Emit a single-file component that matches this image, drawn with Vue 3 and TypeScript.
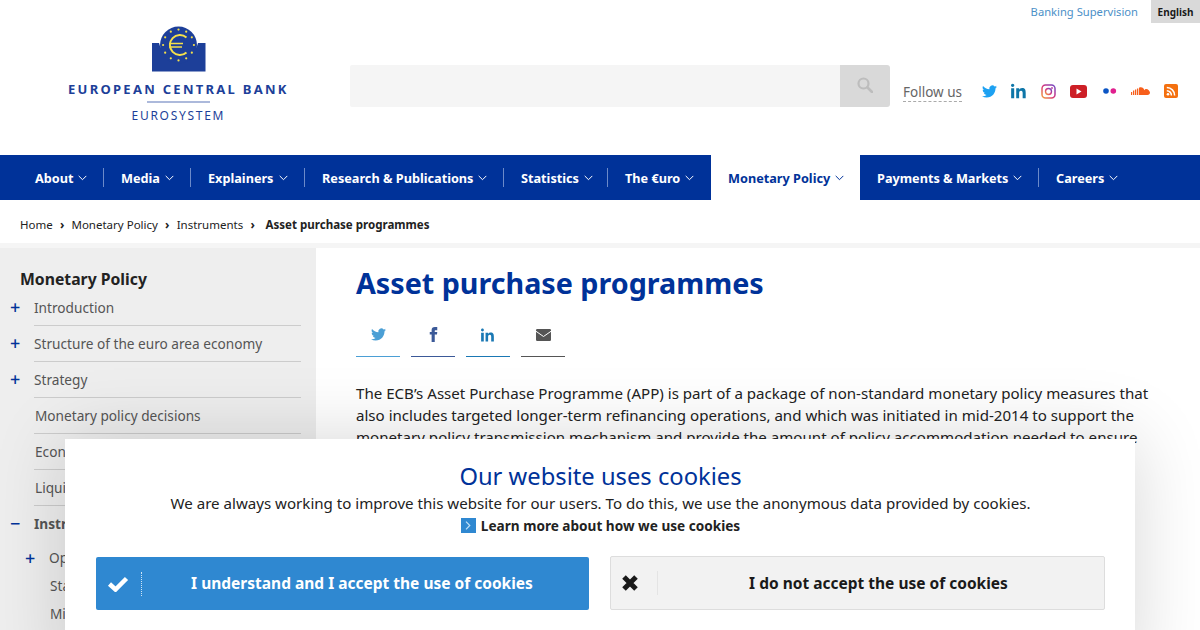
<script setup lang="ts">
interface NavItem { label: string; width: number; active?: boolean }
interface SideItem { label: string; mark?: string; strong?: boolean; level?: number; last?: boolean }
const nav: NavItem[] = [
  { label: 'About', width: 86 }, { label: 'Media', width: 87 }, { label: 'Explainers', width: 114 },
  { label: 'Research & Publications', width: 199 }, { label: 'Statistics', width: 104 }, { label: 'The €uro', width: 104 },
  { label: 'Monetary Policy', width: 149, active: true }, { label: 'Payments & Markets', width: 178 }, { label: 'Careers', width: 100 }
]
const side: SideItem[] = [
  { label: 'Introduction', mark: '+' },
  { label: 'Structure of the euro area economy', mark: '+' },
  { label: 'Strategy', mark: '+' },
  { label: 'Monetary policy decisions' },
  { label: 'Economic and monetary developments' },
  { label: 'Liquidity analysis' },
  { label: 'Instruments', mark: '−', strong: true, last: true }
]
const sub: SideItem[] = [
  { label: 'Open market operations', mark: '+' },
  { label: 'Standing facilities' },
  { label: 'Minimum reserves' }
]
const stars = Array.from({ length: 12 }, (_, i) => {
  const a = (i * Math.PI) / 6
  return { x: 110 + 15.4 * Math.cos(a), y: 24 + 15.4 * Math.sin(a) }
})
</script>

<template>
  <div class="page">
    <header class="header">
      <svg class="logo" viewBox="68 25 220 100" width="220" height="100" role="img" aria-label="European Central Bank">
        <path d="M152 43h7a20 20 0 0 0 39 0h7.500v28.500H152z" fill="#1d3f99" />
        <g transform="translate(68.500 21)">
          <circle cx="110" cy="24" r="18.500" fill="#1d3f99" />
          <circle v-for="(s, i) in stars" :key="i" :cx="s.x" :cy="s.y" r="1.100" fill="#f5e04a" />
          <path d="M118 16.500a10 10 0 1 0 0 15" fill="none" stroke="#f5e04a" stroke-width="2" />
          <path d="M100.500 22.500h14M100.500 26h13" stroke="#f5e04a" stroke-width="1.400" fill="none" />
        </g>
        <text x="68" y="94" class="logo-main" textLength="218.500">EUROPEAN CENTRAL BANK</text>
        <rect x="147" y="101.500" width="63" height="1" fill="#5b74b8" />
        <text x="131.500" y="120" class="logo-sub" textLength="92">EUROSYSTEM</text>
      </svg>

      <div class="search">
        <div class="search-input"></div>
        <div class="search-btn">
          <svg width="16" height="16" viewBox="0 0 16 16"><circle cx="6.500" cy="6.500" r="5" fill="none" stroke="#bdbdbd" stroke-width="2.200" /><path d="M10.500 10.500 15 15" stroke="#bdbdbd" stroke-width="2.600" stroke-linecap="round" /></svg>
        </div>
      </div>

      <span class="follow">Follow us</span>

      <div class="social">
        <svg width="15" height="15" viewBox="0 0 24 24"><path fill="#1da1f2" d="M23.953 4.570a10 10 0 0 1-2.825.775 4.958 4.958 0 0 0 2.163-2.723c-.951.555-2.005.959-3.127 1.184a4.920 4.920 0 0 0-8.384 4.482C7.690 8.095 4.067 6.130 1.640 3.162a4.822 4.822 0 0 0-.666 2.475c0 1.710.870 3.213 2.188 4.096a4.904 4.904 0 0 1-2.228-.616v.060a4.923 4.923 0 0 0 3.946 4.827 4.996 4.996 0 0 1-2.212.085 4.936 4.936 0 0 0 4.604 3.417 9.867 9.867 0 0 1-6.102 2.105c-.390 0-.779-.023-1.170-.067a13.995 13.995 0 0 0 7.557 2.209c9.053 0 13.998-7.496 13.998-13.985 0-.210 0-.420-.015-.630A9.935 9.935 0 0 0 24 4.590z" /></svg>
        <svg class="s-in" width="16" height="16" viewBox="0 0 24 24"><path fill="#0e76a8" d="M4.980 3.500C4.980 4.880 3.870 6 2.500 6S0 4.880 0 3.500 1.120 1 2.500 1s2.480 1.120 2.480 2.500zM.220 8h4.560v15H.220V8zm7.600 0h4.370v2.050h.060c.610-1.150 2.100-2.370 4.320-2.370 4.620 0 5.470 3.040 5.470 7V23h-4.560v-7.400c0-1.770-.030-4.040-2.460-4.040-2.460 0-2.840 1.920-2.840 3.910V23H7.820V8z" /></svg>
        <svg class="s-ig" width="15" height="15" viewBox="0 0 15 15">
          <defs><linearGradient id="ig" x1="0" y1="1" x2="1" y2="0"><stop offset="0" stop-color="#f2a33a" /><stop offset=".5" stop-color="#d6327e" /><stop offset="1" stop-color="#6b4bc8" /></linearGradient></defs>
          <rect x="1" y="1" width="13" height="13" rx="3.500" fill="none" stroke="url(#ig)" stroke-width="1.500" />
          <circle cx="7.500" cy="7.500" r="3" fill="none" stroke="url(#ig)" stroke-width="1.400" />
          <circle cx="11" cy="4" r=".9" fill="#b83ba0" />
        </svg>
        <svg class="s-yt" width="17" height="13" viewBox="0 0 17 13"><rect width="17" height="13" rx="3" fill="#cd1f26" /><path d="M6.500 3.500v6l5-3z" fill="#fff" /></svg>
        <svg class="s-fl" width="14" height="6" viewBox="0 0 14 6"><circle cx="3" cy="3" r="2.800" fill="#0b55c4" /><circle cx="10.300" cy="3" r="2.800" fill="#e01f8e" /></svg>
        <svg class="s-sc" width="19" height="9" viewBox="0 0 19 9"><path fill="#f75f1c" d="M0 5h1.200v3H0zM2 3.500h1.300V8H2zM4 2.500h1.300V8H4zM6 1.500h1.300V8H6zM8 .8C10.500-.500 12.800 1 13.300 3.200 15-.0 19 3.500 19 5.500 19 7 18 8 16.500 8H8z" /></svg>
        <svg class="s-rss" width="14" height="14" viewBox="0 0 14 14"><rect width="14" height="14" rx="2" fill="#f4700f" /><circle cx="4" cy="10.300" r="1.300" fill="#fff" /><path d="M2.800 6.700a4.600 4.600 0 0 1 4.600 4.800M2.800 3.600a7.700 7.700 0 0 1 7.800 7.900" fill="none" stroke="#fff" stroke-width="1.500" /></svg>
      </div>

      <div class="top-links">
        <a class="bank">Banking Supervision</a>
        <span class="lang">English</span>
      </div>
    </header>

    <nav class="nav">
      <div v-for="item in nav" :key="item.label" class="nav-item" :class="{ active: item.active }" :style="{ width: item.width + 'px' }">
        <span>{{ item.label }}</span>
        <svg width="9" height="6" viewBox="0 0 9 6"><path d="M.7.900 4.500 4.700 8.300.9" fill="none" stroke="currentColor" stroke-width="1" /></svg>
      </div>
    </nav>

    <div class="crumbs">
      <span>Home</span><i>›</i><span>Monetary Policy</span><i>›</i><span>Instruments</span><i>›</i><b>Asset purchase programmes</b>
    </div>

    <div class="body">
      <aside class="side">
        <h2>Monetary Policy</h2>
        <ul>
          <li v-for="s in side" :key="s.label" :class="{ strong: s.strong, last: s.last, plain: !s.mark }">
            <em v-if="s.mark">{{ s.mark }}</em>{{ s.label }}
          </li>
        </ul>
        <ul class="sub">
          <li v-for="s in sub" :key="s.label" :class="{ plain: !s.mark }">
            <em v-if="s.mark">{{ s.mark }}</em>{{ s.label }}
          </li>
        </ul>
      </aside>

      <main class="main">
        <h1>Asset purchase programmes</h1>
        <div class="share">
          <a class="tw"><svg width="15" height="15" viewBox="0 0 24 24"><path fill="currentColor" d="M23.953 4.570a10 10 0 0 1-2.825.775 4.958 4.958 0 0 0 2.163-2.723c-.951.555-2.005.959-3.127 1.184a4.920 4.920 0 0 0-8.384 4.482C7.690 8.095 4.067 6.130 1.640 3.162a4.822 4.822 0 0 0-.666 2.475c0 1.710.870 3.213 2.188 4.096a4.904 4.904 0 0 1-2.228-.616v.060a4.923 4.923 0 0 0 3.946 4.827 4.996 4.996 0 0 1-2.212.085 4.936 4.936 0 0 0 4.604 3.417 9.867 9.867 0 0 1-6.102 2.105c-.390 0-.779-.023-1.170-.067a13.995 13.995 0 0 0 7.557 2.209c9.053 0 13.998-7.496 13.998-13.985 0-.210 0-.420-.015-.630A9.935 9.935 0 0 0 24 4.590z" /></svg></a>
          <a class="fb"><svg width="15" height="15" viewBox="0 0 24 24"><path fill="currentColor" d="M9 8H6v4h3v12h5V12h3.600l.4-4h-4V6.300c0-.950.2-1.300 1.100-1.300H18V0h-3.800C10.600 0 9 1.600 9 4.600V8z" /></svg></a>
          <a class="li"><svg width="14" height="14" viewBox="0 0 24 24"><path fill="currentColor" d="M4.980 3.500C4.980 4.880 3.870 6 2.500 6S0 4.880 0 3.500 1.120 1 2.500 1s2.480 1.120 2.480 2.500zM.220 8h4.560v15H.220V8zm7.600 0h4.370v2.050h.060c.610-1.150 2.100-2.370 4.320-2.370 4.620 0 5.470 3.040 5.470 7V23h-4.560v-7.400c0-1.770-.030-4.040-2.460-4.040-2.460 0-2.840 1.920-2.840 3.910V23H7.820V8z" /></svg></a>
          <a class="ml"><svg width="15" height="12" viewBox="0 0 15 12"><rect width="15" height="12" rx="1.200" fill="currentColor" /><path d="M0 2.300 7.500 7.500 15 2.300" fill="none" stroke="#fff" stroke-width="1" /></svg></a>
        </div>
        <p>The ECB’s Asset Purchase Programme (APP) is part of a package of non-standard monetary policy measures that also includes targeted longer-term refinancing operations, and which was initiated in mid-2014 to support the monetary policy transmission mechanism and provide the amount of policy accommodation needed to ensure price stability.</p>
      </main>
    </div>

    <section class="cookie">
      <h3>Our website uses cookies</h3>
      <p>We are always working to improve this website for our users. To do this, we use the anonymous data provided by cookies.</p>
      <a class="learn">
        <span class="learn-mark"><svg width="6" height="9" viewBox="0 0 6 9"><path d="M1 .7 4.800 4.500 1 8.300" fill="none" stroke="#bfe0f7" stroke-width="1.200" /></svg></span>
        Learn more about how we use cookies
      </a>
      <div class="choices">
        <button class="accept">
          <span class="ico"><svg width="22" height="16" viewBox="0 0 22 16"><path d="M2.500 8l6 5.500L19.500 2.500" fill="none" stroke="#fff" stroke-width="4.500" /></svg></span>
          <span class="lbl">I understand and I accept the use of cookies</span>
        </button>
        <button class="refuse">
          <span class="ico"><svg width="16" height="16" viewBox="0 0 16 16"><path d="M2 2l12 12M14 2 2 14" stroke="#1a1a1a" stroke-width="5" /></svg></span>
          <span class="lbl">I do not accept the use of cookies</span>
        </button>
      </div>
    </section>
  </div>
</template>

<style>
html, body { margin: 0; background: #fff; }
</style>

<style scoped>
.page { position: relative; width: 1200px; height: 630px; overflow: hidden; font-family: "Noto Sans", sans-serif; color: #222; }
.header { position: relative; display: flex; height: 155px; box-sizing: border-box; padding-left: 68px; }
.logo { margin-top: 25px; flex: none; }
.logo-main { font: 700 13px "Noto Sans", sans-serif; fill: #1d3f99; }
.logo-sub { font: 400 12px "Noto Sans", sans-serif; fill: #1d3f99; }
.search { display: flex; margin: 65px 0 0 62px; height: 42px; }
.search-input { width: 490px; background: #f5f5f5; border-radius: 2px 0 0 2px; }
.search-btn { width: 50px; background: #d9d9d9; border-radius: 0 3px 3px 0; display: flex; align-items: center; justify-content: center; padding-bottom: 3px; box-sizing: border-box; }
.follow { margin: 82px 0 0 13px; height: 18px; padding-top: 1px; font-size: 13.500px; line-height: 19px; color: #666; border-bottom: 1px dashed #aaa; white-space: nowrap; }
.social { display: flex; align-items: center; height: 14px; margin: 84px 0 0 20px; }
.s-in { margin-left: 14px; }
.s-ig { margin-left: 14px; }
.s-yt { margin-left: 14px; }
.s-fl { margin-left: 16px; }
.s-sc { margin-left: 14px; }
.s-rss { margin-left: 14px; }
.top-links { position: absolute; top: 0; right: 0; display: flex; align-items: flex-start; }
.bank { font-size: 11.200px; line-height: 23px; color: #4b8fc7; margin-right: 13px; }
.lang { width: 49px; height: 23px; background: #d9d9d9; font-size: 10px; font-weight: 700; line-height: 25px; text-align: center; color: #1a1a1a; }

.nav { display: flex; height: 45px; padding-left: 17px; background: #003299; }
.nav-item { position: relative; flex: none; box-sizing: border-box; display: flex; align-items: center; gap: 5px; padding-left: 18px; color: #fff; font-size: 12.700px; font-weight: 700; white-space: nowrap; }
.nav-item + .nav-item::before { content: ""; position: absolute; left: 0; top: 13px; height: 19px; width: 1px; background: #6c8ac9; }
.nav-item.active { background: #fff; color: #003299; padding-left: 17px; }
.nav-item.active + .nav-item { padding-left: 17px; }
.nav-item.active::before, .nav-item.active + .nav-item::before { display: none; }

.crumbs { display: flex; align-items: center; height: 38px; padding: 5px 0 0 20px; font-size: 11.500px; color: #222; border-bottom: 5px solid #f5f5f5; }
.crumbs i { font-style: normal; margin: 0 7.200px; font-size: 12px; font-weight: 700; }
.crumbs b { margin-left: 3.500px; font-size: 11.550px; font-weight: 700; }

.body { display: flex; }
.side { flex: none; width: 316px; height: 382px; box-sizing: border-box; padding: 20px 15px 0 0; background: #eee; }
.side h2 { margin: 0 0 0 20px; font-size: 15.750px; line-height: 22px; font-weight: 700; color: #222; }
.side ul { list-style: none; margin: 0; padding: 0 0 0 34px; }
.side li { position: relative; height: 36px; box-sizing: border-box; font-size: 13.650px; line-height: 36px; color: #555; border-bottom: 1px solid #ccc; white-space: nowrap; }
.side li.plain { padding-left: 1px; }
.side li.strong { font-weight: 700; }
.side li.last { border-bottom: 0; height: 38px; }
.side em { position: absolute; left: -24px; top: -1px; font-style: normal; font-size: 18px; font-weight: 500; color: #003299; }
.side .sub { padding-left: 49px; }
.side .sub li { height: 28px; line-height: 28px; border-bottom: 0; }
.side .sub li.plain { padding-left: 1px; }
.side .sub em { top: 0; left: -24px; }

.main { padding: 15px 40px 0; flex: 1; min-width: 0; }
.main h1 { margin: 0; font-size: 28.700px; line-height: 40px; font-weight: 700; color: #003299; }
.share { display: flex; gap: 11px; margin-top: 14px; }
.share a { width: 44px; height: 40px; display: flex; align-items: center; justify-content: center; box-sizing: border-box; padding-bottom: 4px; border-bottom: 1px solid currentColor; }
.share .tw { color: #4b9fd5; }
.share .fb { color: #3b5998; }
.share .li { color: #1a78b4; }
.share .ml { color: #555; }
.main p { margin: 25px 0 0; font-size: 15.100px; line-height: 22px; color: #222; }

.cookie { position: absolute; left: 65px; top: 439px; width: 1070px; height: 240px; box-sizing: border-box; padding: 20px 30px 0 31px; background: #fff; box-shadow: 0 0 70px rgba(0, 0, 0, .16); text-align: center; }
.cookie h3 { margin: 0; font-size: 23.750px; line-height: 34px; font-weight: 400; color: #003299; }
.cookie p { margin: -1px 0 0; font-size: 15.100px; line-height: 22px; color: #222; }
.learn { display: flex; align-items: center; justify-content: center; gap: 5px; height: 22px; font-size: 13.600px; font-weight: 700; color: #222; }
.learn-mark { width: 15px; height: 15px; background: #2f88d1; display: flex; align-items: center; justify-content: center; }
.choices { display: flex; justify-content: space-between; align-items: flex-end; margin-top: 20px; }
.choices button { display: flex; align-items: center; padding: 0; border-radius: 2px; font: 700 15.500px "Noto Sans", sans-serif; box-sizing: border-box; }
.accept { width: 493px; height: 53px; background: #2f88d1; border: 0; color: #fff; }
.accept .lbl { padding-bottom: 2px; }
.refuse { width: 495px; height: 54px; background: #f2f2f2; border: 1px solid #ddd; color: #1a1a1a; }
.ico { flex: none; width: 46px; height: 24px; display: flex; align-items: center; justify-content: center; box-sizing: border-box; }
.accept .ico { border-right: 1px dotted #cfe4f5; padding-right: 2px; }
.refuse .ico { width: 47px; border-right: 1px solid #e4e4e4; padding-right: 8px; }
.lbl { flex: 1; text-align: center; padding-right: 7px; }
.refuse .lbl { padding-right: 5px; }
</style>
